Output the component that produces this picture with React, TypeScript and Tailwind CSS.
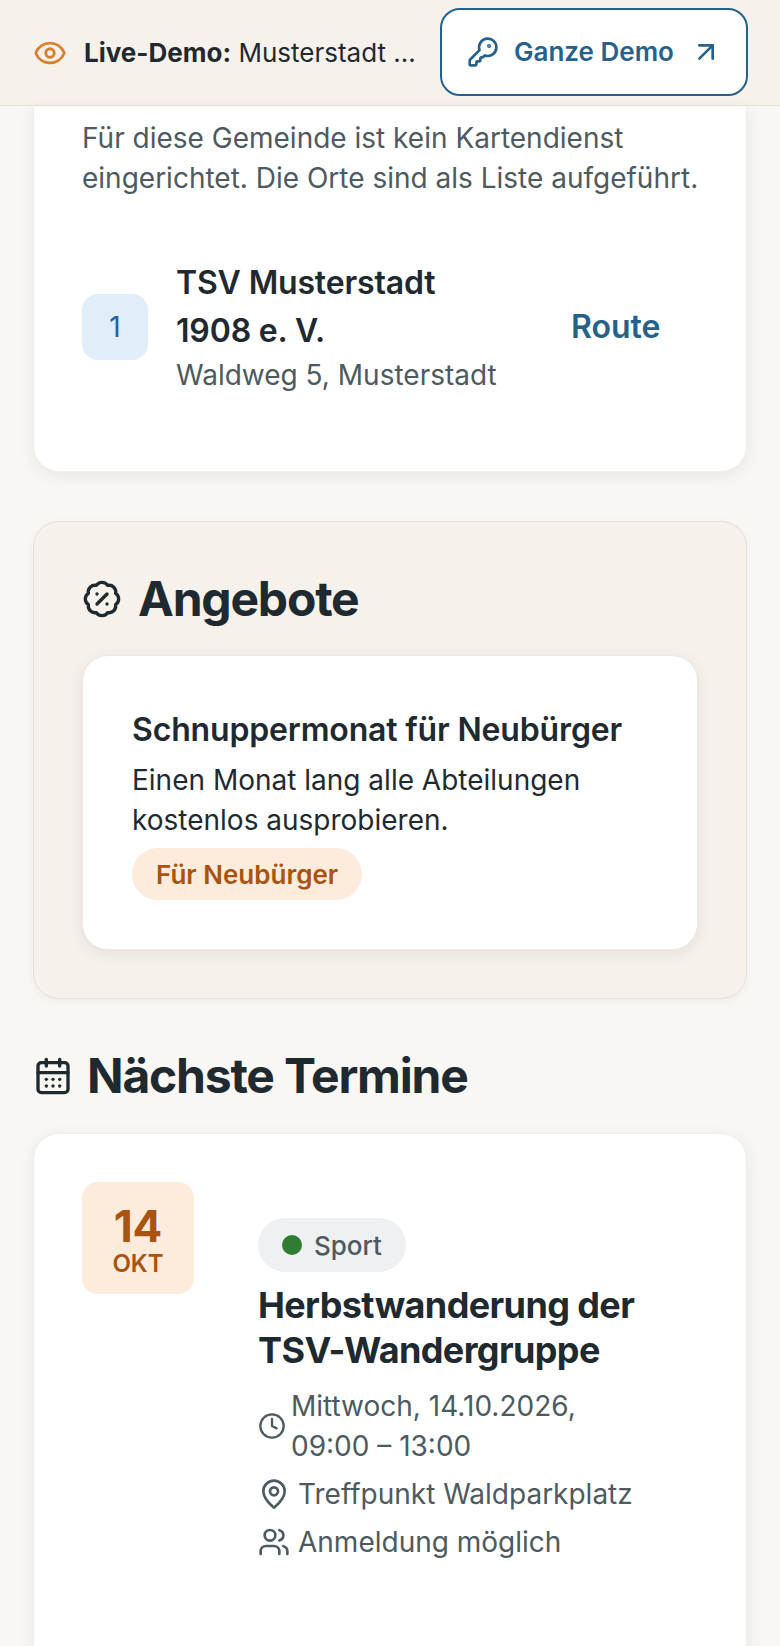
import { ArrowUpRight, BadgePercent, CalendarDays, Clock, Eye, KeyRound, MapPin, Users } from "lucide-react";

export default function App() {
  return (
    <div className="h-[1646px] overflow-hidden bg-[#f9f7f3] text-[#1f2a30] font-['Inter',sans-serif]">
      <header className="h-[106px] flex items-center justify-between pl-[33px] pr-[32px] bg-[#f6f1ea] border-b border-[#e6e1d9]">
        <div className="flex items-center gap-[17px] text-[26px] leading-[36px]">
          <Eye className="w-[34px] h-[34px] text-[#d97f2b]" strokeWidth={2} />
          <span className="whitespace-nowrap">
            <strong className="font-bold">Live-Demo:</strong> Musterstadt ...
          </span>
        </div>
        <a className="w-[308px] h-[88px] mb-[2px] flex items-center pl-[25px] rounded-[20px] border-2 border-[#25618a] bg-white text-[#25618a] text-[26px] font-semibold">
          <KeyRound className="w-[32px] h-[32px] mr-[15px]" strokeWidth={2} />
          Ganze Demo
          <ArrowUpRight className="w-[32px] h-[32px] ml-[16px]" strokeWidth={2} />
        </a>
      </header>
      <main className="px-[33px] flex flex-col">
        <section className="h-[366px] bg-white rounded-b-[26px] shadow-[0_4px_16px_rgba(31,42,48,0.08)] border border-t-0 border-[#efeeeb] px-[48px] pt-[12px]">
          <p className="w-[640px] text-[28px] leading-[40px] text-[#4d5a60]">Für diese Gemeinde ist kein Kartendienst eingerichtet. Die Orte sind als Liste aufgeführt.</p>
          <div className="mt-[61px] flex items-center">
            <div className="w-[66px] h-[66px] rounded-[16px] bg-[#e1edf9] text-[#25619a] flex items-center justify-center text-[28px]">1</div>
            <div className="ml-[28px] w-[330px]">
              <div className="text-[32px] leading-[48px] font-semibold tracking-[-0.005em]">TSV Musterstadt 1908 e. V.</div>
              <div className="text-[28px] leading-[40px] text-[#4d5a60]">Waldweg 5, Musterstadt</div>
            </div>
            <div className="ml-[65px] text-[#25618a] text-[32px] font-semibold">Route</div>
          </div>
        </section>
        <section className="mt-[49px] h-[478px] rounded-[26px] bg-[#f6f1ea] border border-[#e6e1d9] shadow-[0_2px_8px_rgba(31,42,48,0.05)] px-[48px] pt-[48px]">
          <div className="h-[58px] flex items-center gap-[16px]">
            <BadgePercent className="w-[40px] h-[40px]" strokeWidth={2} />
            <h2 className="text-[48px] leading-[58px] font-bold tracking-[-0.025em]">Angebote</h2>
          </div>
          <div className="mt-[27px] h-[295px] rounded-[26px] bg-white border border-[#ebe9e5] shadow-[0_4px_16px_rgba(31,42,48,0.08)] px-[49px] pt-[50px]">
            <h3 className="text-[32px] leading-[48px] font-semibold mb-[6px] tracking-[-0.005em]">Schnuppermonat für Neubürger</h3>
            <p className="text-[28px] leading-[40px]">Einen Monat lang alle Abteilungen kostenlos ausprobieren.</p>
            <span className="mt-[8px] inline-flex h-[52px] items-center px-[24px] rounded-full bg-[#fdebdc] text-[#a9530f] text-[26px] font-semibold">Für Neubürger</span>
          </div>
        </section>
        <div className="mt-[45px] flex items-center gap-[14px]">
          <CalendarDays className="w-[40px] h-[40px]" strokeWidth={2} />
          <h2 className="text-[48px] leading-[64px] font-bold tracking-[-0.025em]">Nächste Termine</h2>
        </div>
        <section className="mt-[25px] h-[600px] bg-white rounded-[26px] border border-[#efeeeb] shadow-[0_4px_16px_rgba(31,42,48,0.08)] px-[48px] pt-[48px] flex">
          <div className="w-[112px] h-[112px] pt-[4px] rounded-[16px] bg-[#fdebdc] text-[#a9530f] flex flex-col items-center justify-center font-bold shrink-0">
            <span className="text-[44px] leading-[47px]">14</span>
            <span className="text-[24px] leading-[28px] font-semibold">OKT</span>
          </div>
          <div className="ml-[64px] pt-[36px]">
            <span className="inline-flex h-[54px] items-center gap-[12px] px-[24px] rounded-full bg-[#eef0f1] text-[#4d5a60] text-[26px] font-medium">
              <span className="w-[20px] h-[20px] rounded-full bg-[#2e7d32]" />Sport
            </span>
            <h3 className="mt-[11px] text-[36px] leading-[45px] font-bold tracking-[-0.017em]">Herbstwanderung der TSV-Wandergruppe</h3>
            <div className="mt-[13px] text-[28px] leading-[40px] text-[#4d5a60] flex flex-col gap-[8px]">
              <div className="flex items-center gap-[5px]"><Clock className="w-[28px] h-[28px] shrink-0" /><span className="w-[300px]">Mittwoch, 14.10.2026, 09:00 – 13:00</span></div>
              <div className="flex items-center gap-[8px]"><MapPin className="w-[32px] h-[32px] shrink-0" />Treffpunkt Waldparkplatz</div>
              <div className="flex items-center gap-[8px]"><Users className="w-[32px] h-[32px] shrink-0" />Anmeldung möglich</div>
            </div>
          </div>
        </section>
      </main>
    </div>
  );
}
